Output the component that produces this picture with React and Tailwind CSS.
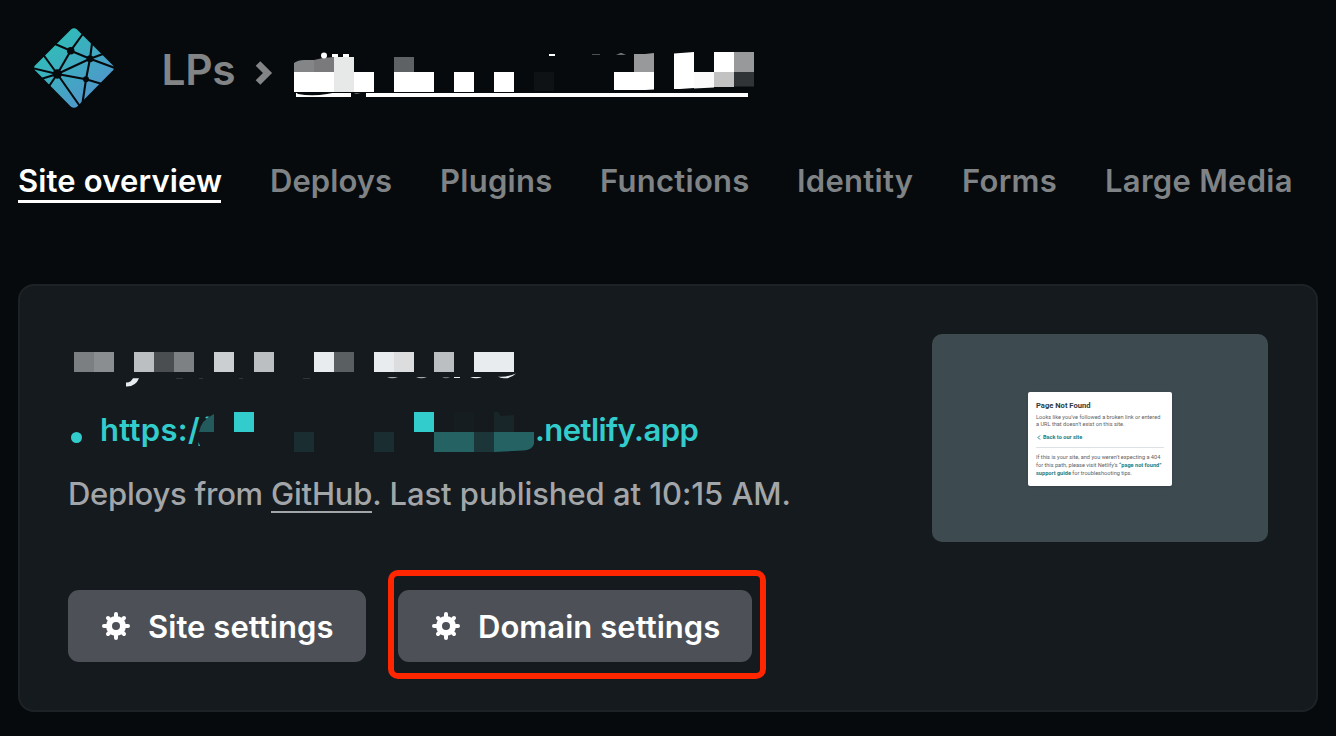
const TITLE_BLOCKS = [
  [6, 20, '#7b7f82'], [26, 20, '#8b8e90'], [66, 20, '#bbbfc2'], [86, 20, '#4a4e51'], [106, 20, '#7d8183'],
  [146, 20, '#cbcfd1'], [186, 20, '#bbbfc2'], [246, 20, '#e8ecee'], [266, 20, '#5a5f61'], [306, 20, '#e8ecee'],
  [326, 20, '#dcddde'], [366, 20, '#bbbfc2'], [406, 40, '#e8ecee'],
];

function Logo() {
  return (
    <svg className="size-20 shrink-0" viewBox="0 0 80 80">
      <defs>
        <linearGradient id="brand" x1="14" y1="16" x2="58" y2="66" gradientUnits="userSpaceOnUse">
          <stop offset="0" stopColor="#30bcb8" />
          <stop offset="1" stopColor="#4e99ca" />
        </linearGradient>
      </defs>
      <path d="M37 1.4Q40-1 43 1.4L79 37.4Q81 39.8 79 42.2L43 78.7Q40 81 37 78.7L1 42.2Q-1 39.8 1 37.4Z" fill="url(#brand)" />
      <g stroke="#060a0d" strokeWidth="2.1" fill="none">
        <path d="M49.500 5L36.700 22.700L20.500 15.700M36.700 22.700L56 30.700L58.200 14M36.700 22.700L23.300 46M56 30.700L82 40.500M56 30.700L69 26M56 30.700L23.300 46M56 30.700L52 51.300L23.300 46M52 51.300L68 56M52 51.300L48.200 77M23.300 46L9.500 27M23.300 46L-1 40.300M23.300 46L7 51M23.300 46L14.500 59M23.300 46L46.500 79" />
      </g>
      <g fill="#060a0d">
        <circle cx="36.7" cy="22.7" r="3.8" />
        <circle cx="56" cy="30.7" r="3.5" />
        <circle cx="23.3" cy="46" r="4.7" />
        <circle cx="52" cy="51.3" r="3" />
      </g>
    </svg>
  );
}

function SiteNameMosaic() {
  return (
    <svg className="h-[50px] w-[462px] shrink-0" viewBox="294 50 462 50">
      <path d="M294 73V63Q298 60 304 60H314V73Z" fill="#848586" />
      <path d="M314 73V60Q322 57.500 334 57V73Z" fill="#7a797b" />
      <g fill="#fff">
        <circle cx="324" cy="55.500" r="3" />
        <path d="M332 57V54H338V57ZM343 57V54H349V57Z" />
        <path d="M294 72H334V92H294ZM354 72H374V92H354ZM394 72H434V92H394ZM454 72H474V92H454ZM494 72H514V92H494Z" />
        <path d="M549 54H555V56H549ZM614 72H654V89.500L645 90H614ZM674 53.500L694 52V88L680 89H674ZM714 52H734V72H714Z" />
        <path d="M296 93H351V97H296ZM366 93H748V97H366Z" />
      </g>
      <path d="M334 57H354V92H334Z" fill="#e7e9e8" />
      <path d="M394 57H414V72H394Z" fill="#5f6264" />
      <path d="M534 72H554V91H534Z" fill="#0e1214" />
      <path d="M634 54H645L654 53V72H634Z" fill="#98999b" />
      <path d="M734 52H754V72H734Z" fill="#98999b" />
      <path d="M694 72H714V87.500L694 88.500Z" fill="#fafafa" />
      <path d="M714 72H734V87H714Z" fill="#c2c2c3" />
      <path d="M734 72H754V86.500H734Z" fill="#303437" />
      <path d="M296 92.500H335L327 94Q312 96.500 298 94Z" fill="#060a0d" />
      <path d="M354 93.300H361L356 94Z" fill="#9a9c9d" />
      <path d="M592 54.500H600" stroke="#4c5052" />
      <path d="M616 54.800L621 53L626 54.800Z" fill="#8a8d8f" />
    </svg>
  );
}

function TitleMosaic() {
  return (
    <svg className="h-15 w-[460px]" viewBox="0 0 460 60">
      {TITLE_BLOCKS.map(([x, w, fill]) => (
        <rect key={x} x={x} y="18" width={w} height="20" fill={fill} />
      ))}
      <path d="M65 44.300H71Q67.500 53 58 52.500V48.500Q62.500 49 65 44.300Z" fill="#e8ecee" />
      <path d="M108 44.500H115M131 44.500H135M171 44.500H175M235 44.500H242" stroke="#303538" />
      <path d="M319 43Q324 45.500 330 43ZM348 43Q353 45.500 359 43Z" fill="#a5a9ab" />
      <path d="M374 43Q378 45.500 382 43Z" fill="#6d7173" />
      <path d="M386 43H392V44H386ZM402 43Q408 45.500 414 43ZM430 42.500Q438 43.500 448 39.500Q443 44.500 436 44.300Q432 44.300 430 42.500Z" fill="#e8ecee" />
    </svg>
  );
}

function UrlMosaic() {
  return (
    <svg className="h-[44px] w-[340px] shrink-0" viewBox="198 410 340 44">
      <path d="M199 432Q201 420 214 414V432Z" fill="#225a5d" />
      <path d="M205 418L206.500 416.500H209L207 418.500ZM198.500 442L200 446H198.500Z" fill="#32cccc" />
      <path d="M234 412H254V432H234ZM414 412H434V432H414Z" fill="#32cccc" />
      <path d="M294 432H314V452H294ZM374 432H394V452H374Z" fill="#1a2e31" />
      <path d="M434 432H474V452H434Z" fill="#246264" />
      <path d="M474 432H494V452H474Z" fill="#1c3538" />
      <path d="M494 432H534V444Q532 450 523 450.500L494 452Z" fill="#246264" />
      <path d="M454 412H474V432H454Z" fill="#161d20" />
      <path d="M494 412H498L501 416L514 415V432H494Z" fill="#182529" />
    </svg>
  );
}

function Gear() {
  return (
    <svg className="size-7 shrink-0" viewBox="-14 -14 28 28" fill="none" stroke="#fff">
      <circle r="7" strokeWidth="6" />
      <path strokeWidth="4" strokeLinecap="round" d="M0-8V-12M0 8V12M8 0H12M-8 0H-12M6-6L8-8M-6-6L-8-8M6 6L8 8M-6 6L-8 8" />
    </svg>
  );
}

function Button({ children, className }) {
  return (
    <button className={`flex h-18 items-center gap-[18px] rounded-[11px] bg-[#4d5157] pl-[34px] text-[31px] font-[580] tracking-[0.05px] whitespace-nowrap text-white ${className}`}>
      <Gear />
      <span className="pt-0.5">{children}</span>
    </button>
  );
}

function Thumbnail() {
  return (
    <div className="flex h-52 w-84 shrink-0 items-center justify-center rounded-[10px] bg-[#3d4a4f]">
      <div className="mt-0.5 h-[94px] w-36 rounded-[2px] bg-white px-2 pt-2 font-['Roboto',sans-serif] text-[5.6px] leading-[7px] whitespace-nowrap text-[#5c6266] shadow">
        <h3 className="pt-px text-[7.6px] leading-[10px] font-bold text-[#2d3b41]">Page Not Found</h3>
        <p className="mt-[3px]">Looks like you’ve followed a broken link or entered<br />a URL that doesn’t exist on this site.</p>
        <p className="mt-[6px] flex items-center gap-[2px] pl-[1px] font-bold text-[#1b8085]">
          <svg className="h-[5px] w-[4px]" viewBox="0 0 4 5"><path d="M3 .5L1 2.500L3 4.500" stroke="#1b8085" fill="none" /></svg>
          Back to our site
        </p>
        <hr className="mt-[6px] border-[#dfe2e4]" />
        <p className="mt-[6px] leading-[7.800px]">If this is your site, and you weren’t expecting a 404<br />for this path, please visit Netlify’s <b className="text-[#1b8085]">“page not found”</b><br /><b className="text-[#1b8085]">support guide</b> for troubleshooting tips.</p>
      </div>
    </div>
  );
}

export default function App() {
  return (
    <div className="h-[736px] w-[1336px] overflow-hidden bg-[#060a0d] px-[18px] pt-7 font-['Inter',sans-serif]">
      <header className="flex h-20 items-center pl-4">
        <Logo />
        <span className="ml-[47.500px] w-[92.500px] pt-1 text-[42.500px] font-[560] tracking-[-0.3px] text-[#828486]">LPs</span>
        <svg className="mt-2.5 mr-[21px] ml-[1px] h-6 w-[18px]" viewBox="0 0 18 24" fill="none" stroke="#828486" strokeWidth="6.500">
          <path d="M3 2.500L12.500 12L3 21.500" />
        </svg>
        <div className="pt-3.5"><SiteNameMosaic /></div>
      </header>

      <nav className="mt-[53px] flex h-[42px] gap-12 text-[31px] leading-10 font-[560] tracking-[0.28px] whitespace-nowrap text-[#7f8385]">
        <a className="w-[203px] border-b-3 border-white tracking-[0.15px] text-white">Site overview</a>
        <a className="w-[122px] pl-px tracking-[0.05px]">Deploys</a>
        <a className="w-[112px] pl-px">Plugins</a>
        <a className="w-[150px] pl-px">Functions</a>
        <a className="w-[116px]">Identity</a>
        <a className="w-[96px] pl-px">Forms</a>
        <a className="w-[188px]">Large Media</a>
      </nav>

      <main className="mt-[81px] flex h-[428px] w-[1300px] justify-between rounded-2xl border-2 border-[#1d2226] bg-[#151a1e] p-12">
        <section className="flex flex-col">
          <TitleMosaic />
          <div className="mt-3.5 flex h-[48px] items-center text-[31px] font-[580] whitespace-nowrap text-[#32cccc]">
            <span className="mt-2.5 ml-[3px] size-[11px] shrink-0 rounded-full bg-[#32cccc]" />
            <span className="ml-[18px] w-[98px] pb-1 tracking-[0.3px]">https:/</span>
            <UrlMosaic />
            <span className="-ml-[3px] pb-1 tracking-[-0.55px]">.netlify.app</span>
          </div>
          <p className="mt-3.5 text-[31px] leading-12 font-[450] whitespace-nowrap text-[#a3a6a9]">
            <span className="tracking-[-0.25px]">Deploys from </span><a className="inline-block border-b-2 border-[#a3a6a9] leading-[34px] tracking-[-0.2px]">GitHub</a><span className="tracking-[-0.05px]">. Last published at 10:15 AM.</span>
          </p>
          <div className="mt-auto flex gap-8">
            <Button className="w-[298px]">Site settings</Button>
            <div className="relative">
              <Button className="w-[354px]">Domain settings</Button>
              <div className="absolute -top-5 -left-2.5 h-[109px] w-[378px] rounded-[10px] border-6 border-[#ff2600]" />
            </div>
          </div>
        </section>
        <Thumbnail />
      </main>
    </div>
  );
}
